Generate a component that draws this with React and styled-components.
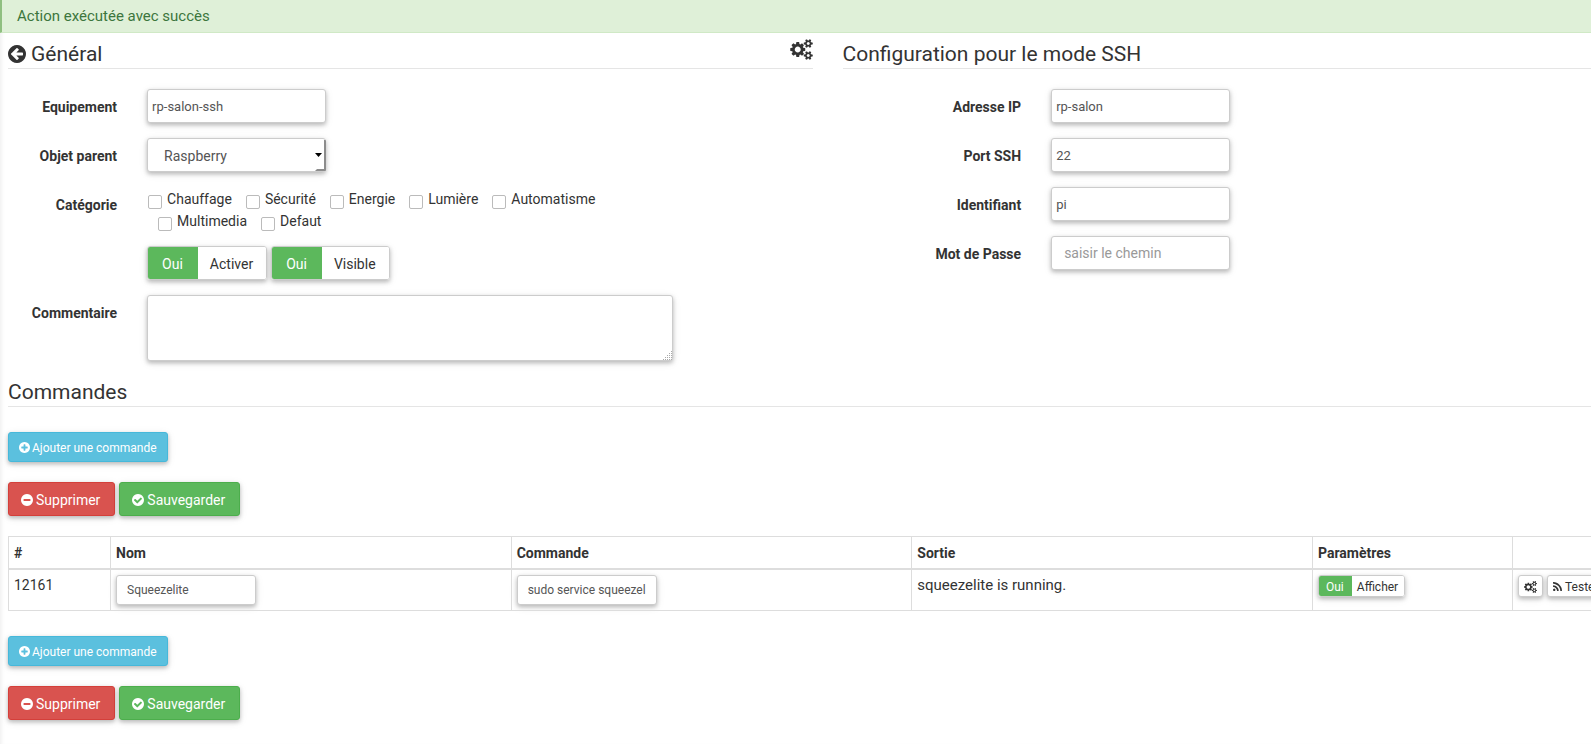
import React from "react";
import styled, { createGlobalStyle, css } from "styled-components";

const GlobalStyle = createGlobalStyle`
  *, *::before, *::after { box-sizing: border-box; }
  body {
    margin: 0;
    background: #fff;
    color: #333;
    font-family: Roboto, "Liberation Sans", sans-serif;
    font-size: 14px;
    line-height: 20px;
  }
  button, input, select, textarea { font-family: inherit; margin: 0; }
`;

const raised = css`
  box-shadow: 0 2px 4px rgba(0, 0, 0, 0.24), 0 2px 10px rgba(0, 0, 0, 0.08);
`;

const Page = styled.div`
  min-height: 100vh;
  overflow-x: hidden;
  box-shadow: inset 4px 0 4px -3px rgba(0, 0, 0, 0.08);
`;

const Alert = styled.div`
  padding: 6px 15px;
  border-left: 2px solid #8fbf80;
  border-bottom: 1px solid #d0e9c6;
  background: #dff0d8;
  color: #3c763d;
  font-size: 15px;
`;

/* The panel is wider than the viewport, its end runs under the right edge. */
const Content = styled.main`
  margin: 0 -56px 0 8px;
`;

const Columns = styled.div`
  display: grid;
  grid-template-columns: 1fr 1fr;
  gap: 30px;
`;

const Legend = styled.h2`
  display: flex;
  align-items: center;
  gap: 5px;
  margin: 0 0 20px;
  padding: 6px 0 0;
  height: 36px;
  border-bottom: 1px solid #e5e5e5;
  font-size: 21px;
  font-weight: 400;
  line-height: 30px;
`;

const BackButton = styled.button`
  display: flex;
  padding: 0;
  border: 0;
  background: none;
  color: inherit;
`;

const SettingsButton = styled(BackButton)`
  align-self: flex-start;
  margin-left: auto;
`;

const Row = styled.div`
  display: grid;
  grid-template-columns: repeat(12, 1fr);
  column-gap: 30px;
  margin-bottom: 15px;
  &:last-child { margin-bottom: 0; }
`;

const Label = styled.label`
  grid-column: span ${(p) => p.$span};
  padding-top: 8px;
  font-weight: 700;
  text-align: right;
  white-space: nowrap;
  justify-self: end;
`;

const Cell = styled.div`
  grid-column: ${(p) => p.$start || "auto"} / span ${(p) => p.$span};
  display: flex;
  flex-wrap: wrap;
`;

const control = css`
  width: 100%;
  border: 1px solid #ccc;
  border-radius: 3px;
  background: #fff;
  color: #555;
  ${raised}
`;

const Field = styled.input`
  ${control}
  height: 34px;
  padding: 0 ${(p) => (p.$roomy ? 12 : 4)}px;
  font-size: ${(p) => (p.$roomy ? 14 : 13)}px;
  &::placeholder { color: #999; opacity: 1; }
`;

const SmallField = styled(Field)`
  display: block;
  width: 140px;
  height: 30px;
  padding: 0 10px;
  font-size: 12px;
`;

const ControlBox = styled.div`
  position: relative;
  width: 100%;
`;

const Select = styled.select`
  ${control}
  display: block;
  height: 34px;
  padding: 1px 16px 0;
  font-size: 14px;
  appearance: none;
`;

const Caret = styled.svg`
  position: absolute;
  right: 0;
  top: 1px;
  pointer-events: none;
`;

const Area = styled.textarea`
  ${control}
  display: block;
  height: 66px;
  padding: 6px 12px;
  font-size: 14px;
  &::-webkit-resizer { background: transparent; }
`;

const Grip = styled.svg`
  position: absolute;
  right: 1px;
  bottom: 1px;
  pointer-events: none;
`;

const CheckList = styled.div`
  grid-column: span 8;
  display: flex;
  flex-wrap: wrap;
`;

const Check = styled.label`
  display: flex;
  gap: 5px;
  height: 22px;
  padding: 0 3px 0 1px;
  margin-left: ${(p) => (p.$first ? 0 : 10)}px;
  line-height: 24px;
`;

const Tick = styled.input`
  appearance: none;
  width: 14px;
  height: 14px;
  margin-top: 8px;
  border: 1px solid #bbb;
  border-radius: 2px;
  background: #fff;
`;

const Group = styled.div`
  display: inline-flex;
  height: ${(p) => (p.$small ? 22 : 34)}px;
  margin-right: 4px;
  border: 1px solid #ccc;
  border-radius: 3px;
  overflow: hidden;
  font-size: ${(p) => (p.$small ? 12 : 14)}px;
  ${raised}
`;

const Segment = styled.button`
  padding: 1px ${(p) => (p.$small ? "6px 0 5px" : "13px 0 12px")};
  border: 0;
  background: #fff;
  color: #333;
  font-size: inherit;
`;

const StateSegment = styled(Segment)`
  padding: 1px ${(p) => (p.$small ? "8px 0 7px" : "15px 0 14px")};
  background: #5cb85c;
  color: #fff;
`;

const tones = {
  info: ["#5bc0de", "#46b8da"],
  danger: ["#d9534f", "#d43f3a"],
  success: ["#5cb85c", "#4cae4c"],
};

const Button = styled.button`
  display: inline-flex;
  align-items: center;
  gap: ${(p) => (p.$small ? 2 : 3)}px;
  height: ${(p) => (p.$small ? 30 : 34)}px;
  padding: ${(p) => (p.$small ? "1px 10px 0" : "1px 14px 0 12px")};
  border: 1px solid ${(p) => tones[p.$tone][1]};
  border-radius: 3px;
  background: ${(p) => tones[p.$tone][0]};
  color: #fff;
  font-size: ${(p) => (p.$small ? 12 : 14)}px;
  white-space: nowrap;
  ${raised}
`;

const TinyButton = styled.button`
  display: inline-flex;
  align-items: center;
  gap: 3px;
  height: 22px;
  padding: 1px 5px 0;
  border: 1px solid #ccc;
  border-radius: 3px;
  background: #fff;
  color: #333;
  font-size: 12px;
  ${raised}
`;

const Bar = styled.div`
  display: flex;
  gap: 4px;
  margin-bottom: 20px;
`;

const Table = styled.table`
  width: 100%;
  margin-bottom: 25px;
  border-collapse: collapse;
  table-layout: fixed;
  th, td { border: 1px solid #ddd; padding: 5px; text-align: left; vertical-align: top; }
  th { border-bottom-width: 2px; padding-top: 6px; }
`;

const OutputCell = styled.td`
  font-size: 15px;
`;

const CIRCLE =
  "M1664 896q0 209-103 385.5t-279.5 279.5-385.5 103-385.5-103-279.5-279.5-103-385.5 103-385.5 279.5-279.5 385.5-103 385.5 103 279.5 279.5 103 385.5z";
const GEAR_SMALL =
  "v140q0 16-149 31-12 27-30 52 51 113 51 138 0 4-4 7-122 71-124 71-8 0-46-47t-52-68q-20 2-30 2t-30-2q-14 21-52 68t-46 47q-2 0-124-71-4-3-4-7 0-25 51-138-18-25-30-52-149-15-149-31v-140q0-16 149-31 13-29 30-52-51-113-51-138 0-4 4-7 4-2 35-20t59-34 30-16q8 0 46 46.5t52 67.5q20-2 30-2t30 2q51-71 92-112l6-2q4 0 124 70 4 3 4 7 0 25-51 138 17 23 30 52 149 15 149 31z";

const glyphs = {
  back: [
    "128 128 1536 1536",
    CIRCLE +
      "M1408 960v-128q0-26-19-45t-45-19h-502l189-189q19-19 19-45t-19-45l-91-91q-18-18-45-18t-45 18l-362 362-91 91q-18 18-18 45t18 45l91 91 362 362q18 18 45 18t45-18l91-91q18-18 18-45t-18-45l-189-189h502q26 0 45-19t19-45z",
  ],
  plus: [
    "128 128 1536 1536",
    CIRCLE +
      "M1344 960v-128q0-26-19-45t-45-19h-256v-256q0-26-19-45t-45-19h-128q-26 0-45 19t-19 45v256h-256q-26 0-45 19t-19 45v128q0 26 19 45t45 19h256v256q0 26 19 45t45 19h128q26 0 45-19t19-45v-256h256q26 0 45-19t19-45z",
  ],
  minus: [
    "128 128 1536 1536",
    CIRCLE +
      "M1344 960v-128q0-26-19-45t-45-19h-768q-26 0-45 19t-19 45v128q0 26 19 45t45 19h768q26 0 45-19t19-45z",
  ],
  check: [
    "128 128 1536 1536",
    CIRCLE +
      "M1412 734q0-28-18-46l-91-90q-19-19-45-19t-45 19l-408 407-226-226q-19-19-45-19t-45 19l-91 90q-18 18-18 46 0 27 18 45l362 362q19 19 45 19 27 0 46-19l543-543q18-18 18-45z",
  ],
  rss: [
    "192 128 1408 1408",
    "M576 1344q0 80-56 136t-136 56-136-56-56-136 56-136 136-56 136 56 56 136zm512 123q2 28-17 48-18 21-47 21h-135q-25 0-43-16.5t-20-41.5q-22-229-184.5-391.5t-391.5-184.5q-25-2-41.5-20t-16.5-43v-135q0-29 21-47 17-17 43-17h5q160 13 306 80.5t259 181.5q114 113 181.5 259t80.5 306zm512 2q2 27-18 47-18 20-46 20h-143q-26 0-44.5-17.5t-19.5-42.5q-12-215-101-408.5t-231.5-336-336-231.5-408.5-102q-25-1-42.5-19.5t-17.5-43.5v-143q0-28 20-46 18-18 44-18h3q262 13 501.5 120t425.5 294q187 186 294 425.5t120 501.5z",
  ],
  gears: [
    "0 0 1920 1792",
    "M896 896q0-106-75-181t-181-75-181 75-75 181 75 181 181 75 181-75 75-181zm768 512q0-52-38-90t-90-38-90 38-38 90q0 53 37.5 90.5t90.5 37.5 90.5-37.5 37.5-90.5zm0-1024q0-52-38-90t-90-38-90 38-38 90q0 53 37.5 90.5t90.5 37.5 90.5-37.5 37.5-90.5zm-384 421v185q0 10-7 19.5t-16 10.5l-155 24q-11 35-32 76 34 48 90 115 7 11 7 20 0 12-7 19-23 30-82.5 89.5t-78.5 59.5q-11 0-21-7l-115-90q-37 19-77 31-11 108-23 155-7 24-30 24h-186q-11 0-20-7.5t-10-17.5l-23-153q-34-10-75-31l-118 89q-7 7-20 7-11 0-21-8-144-133-144-160 0-9 7-19 10-14 41-53t47-61q-23-44-35-82l-152-24q-10-1-17-9.5t-7-19.5v-185q0-10 7-19.5t16-10.5l155-24q11-35 32-76-34-48-90-115-7-11-7-20 0-12 7-20 22-30 82-89t79-59q11 0 21 7l115 90q34-18 77-32 11-108 23-154 7-24 30-24h186q11 0 20 7.5t10 17.5l23 153q34 10 75 31l118-89q8-7 20-7 11 0 21 8 144 133 144 160 0 8-7 19-12 16-42 54t-45 60q23 48 34 82l152 23q10 2 17 10.5t7 19.5z" +
      "M1920 1338" + GEAR_SMALL + "M1920 314" + GEAR_SMALL,
  ],
};

function Glyph({ name, width, height = width }) {
  const [viewBox, d] = glyphs[name];
  return (
    <svg width={width} height={height} viewBox={viewBox} fill="currentColor" aria-hidden="true">
      <path fillRule="evenodd" d={d} />
    </svg>
  );
}

function TextRow({ id, label, span, ...rest }) {
  return (
    <Row>
      <Label htmlFor={id} $span={span}>{label}</Label>
      <Cell $span={3}>
        <Field id={id} type="text" {...rest} />
      </Cell>
    </Row>
  );
}

function Toggle({ text, small }) {
  return (
    <Group $small={small}>
      <StateSegment type="button" $small={small}>Oui</StateSegment>
      <Segment type="button" $small={small}>{text}</Segment>
    </Group>
  );
}

function Actions() {
  return (
    <>
      <Bar>
        <Button type="button" $tone="info" $small>
          <Glyph name="plus" width={11} />
          Ajouter une commande
        </Button>
      </Bar>
      <Bar>
        <Button type="button" $tone="danger">
          <Glyph name="minus" width={12} />
          Supprimer
        </Button>
        <Button type="button" $tone="success">
          <Glyph name="check" width={12} />
          Sauvegarder
        </Button>
      </Bar>
    </>
  );
}

const CommandSection = styled.section`
  ${Legend} { margin: 10px 0 25px; }
`;

const TinyBar = styled.div`
  display: flex;
  gap: 4px;
`;

const categories = ["Chauffage", "Sécurité", "Energie", "Lumière", "Automatisme", "Multimedia", "Defaut"];

export default function App() {
  return (
    <Page>
      <GlobalStyle />
      <Alert role="status">Action exécutée avec succès</Alert>
      <Content>
        <Columns>
          <form>
            <Legend>
              <BackButton type="button" aria-label="Retour">
                <Glyph name="back" width={18} />
              </BackButton>
              Général
              <SettingsButton type="button" aria-label="Configuration avancée">
                <Glyph name="gears" width={23} height={21} />
              </SettingsButton>
            </Legend>
            <TextRow id="name" label="Equipement" span={2} defaultValue="rp-salon-ssh" />
            <Row>
              <Label htmlFor="parent" $span={2}>Objet parent</Label>
              <Cell $span={3}>
                <ControlBox>
                  <Select id="parent" defaultValue="Raspberry">
                    <option>Raspberry</option>
                  </Select>
                  <Caret width="14" height="33" viewBox="0 0 14 33" aria-hidden="true">
                    <path d="M3 14h7L6.500 18z" fill="#000" />
                    <path d="M12 1h1q1 0 1 1v29q0 1-1 1H3l2-2h7z" fill="#8c8c8c" />
                  </Caret>
                </ControlBox>
              </Cell>
            </Row>
            <Row>
              <Label as="span" $span={2}>Catégorie</Label>
              <CheckList>
                {categories.map((c, i) => (
                  <Check key={c} $first={i === 0}>
                    <Tick type="checkbox" />
                    {c}
                  </Check>
                ))}
              </CheckList>
            </Row>
            <Row>
              <Cell $start={3} $span={8}>
                <Toggle text="Activer" />
                <Toggle text="Visible" />
              </Cell>
            </Row>
            <Row>
              <Label htmlFor="comment" $span={2}>Commentaire</Label>
              <Cell $span={8}>
                <ControlBox>
                  <Area id="comment" />
                  <Grip width="9" height="9" viewBox="0 0 9 9" aria-hidden="true">
                    <path
                      d="M8 0h1v1h-1zM6 2h1v1h-1zM8 2h1v1h-1zM4 4h1v1h-1zM6 4h1v1h-1zM8 4h1v1h-1zM2 6h1v1h-1zM4 6h1v1h-1zM6 6h1v1h-1zM8 6h1v1h-1zM0 8h1v1h-1zM2 8h1v1h-1zM4 8h1v1h-1zM6 8h1v1h-1zM8 8h1v1h-1z"
                      fill="#aaa"
                    />
                  </Grip>
                </ControlBox>
              </Cell>
            </Row>
          </form>
          <form>
            <Legend>Configuration pour le mode SSH</Legend>
            <TextRow id="ip" label="Adresse IP" span={3} defaultValue="rp-salon" />
            <TextRow id="port" label="Port SSH" span={3} defaultValue="22" />
            <TextRow id="user" label="Identifiant" span={3} defaultValue="pi" />
            <TextRow id="pass" label="Mot de Passe" span={3} placeholder="saisir le chemin" $roomy />
          </form>
        </Columns>
        <CommandSection>
          <Legend>Commandes</Legend>
          <Actions />
          <Table>
            <colgroup>
              <col width="102" />
              <col />
              <col />
              <col />
              <col width="200" />
              <col width="134" />
            </colgroup>
            <thead>
              <tr>
                <th>#</th>
                <th>Nom</th>
                <th>Commande</th>
                <th>Sortie</th>
                <th>Paramètres</th>
                <th />
              </tr>
            </thead>
            <tbody>
              <tr>
                <td>12161</td>
                <td><SmallField aria-label="Nom" defaultValue="Squeezelite" /></td>
                <td><SmallField aria-label="Commande" defaultValue="sudo service squeezelite status" /></td>
                <OutputCell>squeezelite is running.</OutputCell>
                <td><Toggle text="Afficher" small /></td>
                <td>
                  <TinyBar>
                    <TinyButton type="button" aria-label="Configurer">
                      <Glyph name="gears" width={13} height={12} />
                    </TinyButton>
                    <TinyButton type="button">
                      <Glyph name="rss" width={9} />
                      Tester
                    </TinyButton>
                  </TinyBar>
                </td>
              </tr>
            </tbody>
          </Table>
          <Actions />
        </CommandSection>
      </Content>
    </Page>
  );
}
